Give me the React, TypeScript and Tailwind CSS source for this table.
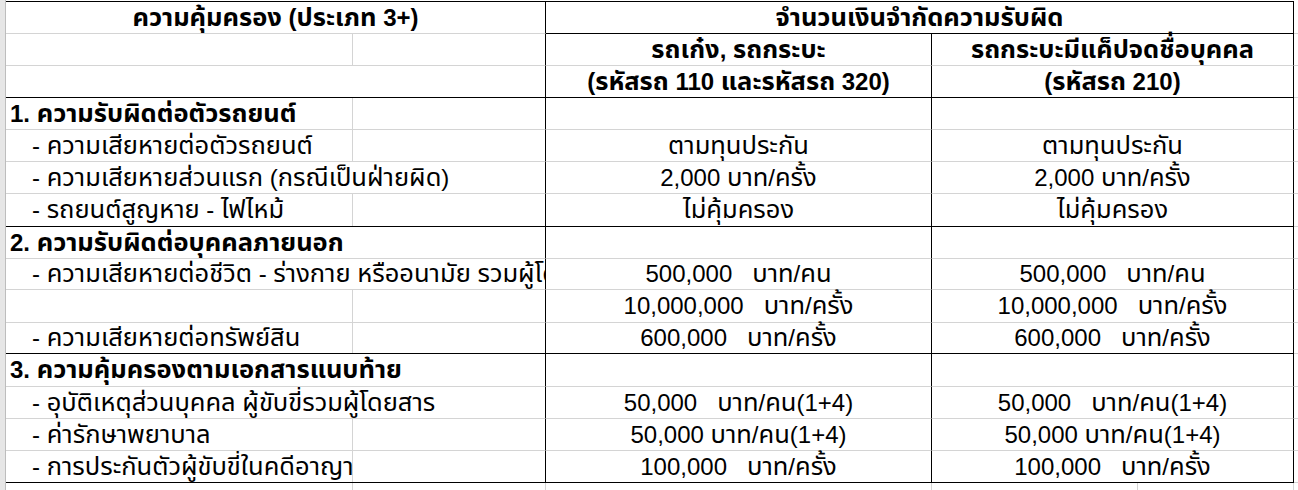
import React from "react";

type RowDef = {
  h: string;
  a?: string;
  aBold?: boolean;
  aIndent?: boolean;
  aGrid?: boolean;
  b?: string;
  c?: string;
  bcBold?: boolean;
  black?: boolean;
};

const rows: RowDef[] = [
  { h: "h-[32px]", aGrid: true, b: "รถเก๋ง, รถกระบะ", c: "รถกระบะมีแค็ปจดชื่อบุคคล", bcBold: true },
  { h: "h-[32px]", b: "(รหัสรถ 110 และรหัสรถ 320)", c: "(รหัสรถ 210)", bcBold: true, black: true },
  { h: "h-[32px]", a: "1. ความรับผิดต่อตัวรถยนต์", aBold: true, aGrid: true },
  { h: "h-[32px]", a: "- ความเสียหายต่อตัวรถยนต์", aIndent: true, aGrid: true, b: "ตามทุนประกัน", c: "ตามทุนประกัน" },
  { h: "h-[32px]", a: "- ความเสียหายส่วนแรก (กรณีเป็นฝ่ายผิด)", aIndent: true, b: "2,000 บาท/ครั้ง", c: "2,000 บาท/ครั้ง" },
  { h: "h-[33px]", a: "- รถยนต์สูญหาย - ไฟไหม้", aIndent: true, aGrid: true, b: "ไม่คุ้มครอง", c: "ไม่คุ้มครอง", black: true },
  { h: "h-[32px]", a: "2. ความรับผิดต่อบุคคลภายนอก", aBold: true },
  { h: "h-[31px]", a: "- ความเสียหายต่อชีวิต - ร่างกาย หรืออนามัย รวมผู้โดยสาร", aIndent: true, b: "500,000   บาท/คน", c: "500,000   บาท/คน" },
  { h: "h-[33px]", aGrid: true, b: "10,000,000   บาท/ครั้ง", c: "10,000,000   บาท/ครั้ง" },
  { h: "h-[31px]", a: "- ความเสียหายต่อทรัพย์สิน", aIndent: true, aGrid: true, b: "600,000   บาท/ครั้ง", c: "600,000   บาท/ครั้ง", black: true },
  { h: "h-[33px]", a: "3. ความคุ้มครองตามเอกสารแนบท้าย", aBold: true },
  { h: "h-[32px]", a: "- อุบัติเหตุส่วนบุคคล ผู้ขับขี่รวมผู้โดยสาร", aIndent: true, b: "50,000   บาท/คน(1+4)", c: "50,000   บาท/คน(1+4)" },
  { h: "h-[32px]", a: "- ค่ารักษาพยาบาล", aIndent: true, aGrid: true, b: "50,000 บาท/คน(1+4)", c: "50,000 บาท/คน(1+4)" },
  { h: "h-[32px]", a: "- การประกันตัวผู้ขับขี่ในคดีอาญา", aIndent: true, aGrid: true, b: "100,000   บาท/ครั้ง", c: "100,000   บาท/ครั้ง", black: true },
];

function T({ s }: { s?: string }) {
  if (!s) return null;
  const parts = s.split(/([\u0E00-\u0E7F]+)/);
  return (
    <>
      {parts.map((p, i) =>
        /[\u0E00-\u0E7F]/.test(p) ? (
          <span key={i} className="text-[25.5px]">
            {p}
          </span>
        ) : (
          <span key={i}>{p}</span>
        )
      )}
    </>
  );
}

function Row({ r }: { r: RowDef }) {
  const bb = r.black ? "border-b-black" : "border-b-[#d4d4d4]";
  return (
    <div className={`flex ${r.h}`}>
      <div className={`w-[540px] shrink-0 flex overflow-hidden border-r border-r-black border-b ${bb}`}>
        <div
          className={`w-[347px] shrink-0 h-full flex items-center whitespace-pre ${r.aIndent ? "pl-[26px]" : "pl-[4px]"} ${
            r.aGrid ? "border-r border-r-[#d4d4d4]" : ""
          } ${r.aBold ? "font-bold" : ""}`}
        >
          <T s={r.a} />
        </div>
      </div>
      <div
        className={`w-[386px] shrink-0 flex items-center justify-center whitespace-pre border-r border-r-black border-b ${bb} ${
          r.bcBold ? "font-bold" : ""
        }`}
      >
        <T s={r.b} />
      </div>
      <div
        className={`w-[362px] shrink-0 flex items-center justify-center whitespace-pre border-r border-r-black border-b ${bb} ${
          r.bcBold ? "font-bold" : ""
        }`}
      >
        <T s={r.c} />
      </div>
      <div className="flex-1 border-b border-b-[#d4d4d4]" />
    </div>
  );
}

export default function App() {
  return (
    <div className="w-[1298px] h-[490px] bg-white overflow-hidden flex text-black text-[24px] leading-none font-['Liberation_Sans','Noto_Sans_Thai','Tahoma',sans-serif]">
      <div className="w-[6px] shrink-0 bg-[#e6e6e6] border-r border-r-[#bdbdbd]" />
      <div className="flex-1 flex flex-col pt-[1px]">
        <div className="flex flex-col">
          <div className="flex h-[33px]">
            <div className="w-[540px] shrink-0 flex items-center justify-center whitespace-pre font-bold border-t border-t-black border-r border-r-black border-b border-b-[#d4d4d4]">
              <T s="ความคุ้มครอง (ประเภท 3+)" />
            </div>
            <div className="w-[748px] shrink-0 flex items-center justify-center whitespace-pre font-bold border-t border-t-black border-r border-r-black border-b border-b-black">
              <T s="จำนวนเงินจำกัดความรับผิด" />
            </div>
            <div className="flex-1 border-b border-b-[#d4d4d4]" />
          </div>
          {rows.map((r, i) => (
            <Row key={i} r={r} />
          ))}
        </div>
        <div className="flex flex-1">
          <div className="w-[347px] shrink-0 border-r border-r-[#d4d4d4]" />
          <div className="w-[193px] shrink-0 border-r border-r-[#d4d4d4]" />
          <div className="w-[386px] shrink-0 border-r border-r-[#d4d4d4]" />
          <div className="w-[206px] shrink-0 border-r border-r-[#d4d4d4]" />
          <div className="w-[156px] shrink-0 border-r border-r-[#d4d4d4]" />
          <div className="flex-1" />
        </div>
      </div>
    </div>
  );
}
